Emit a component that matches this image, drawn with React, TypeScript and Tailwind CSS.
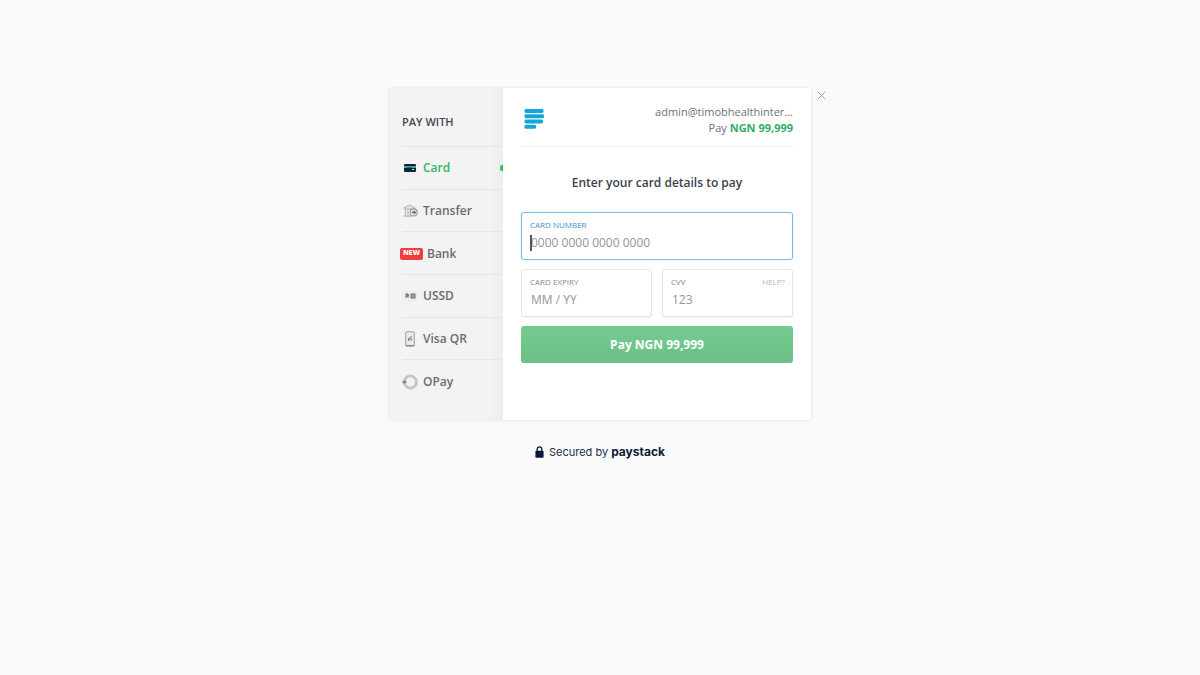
import type { ReactNode } from "react";

function CardIcon() {
  return (
    <svg width="12" height="8" viewBox="0 0 12 8" aria-hidden="true">
      <rect width="12" height="8" rx="1.2" fill="#0f2140" />
      <rect y="2" width="12" height="2" fill="#35b46c" />
      <rect x="3" y="3" width="5" height="1" fill="#2b6a78" />
      <rect x="8" y="5" width="2" height="1" fill="#e8eef2" />
    </svg>
  );
}

function TransferIcon() {
  return (
    <svg width="15" height="14" viewBox="0 0 15 14" fill="none" aria-hidden="true">
      <path d="M1 5V3.8L6.5 1 12 3.8V5z" fill="#dfe2e4" stroke="#b3b8bb" />
      <path d="M2.5 5v6.5M5 5v6.5M7.5 5v2M11 5v1" stroke="#b9bec1" strokeWidth="1.2" />
      <path d="M0.5 12h8" stroke="#b3b8bb" strokeWidth="1.4" />
      <circle cx="10.7" cy="8.4" r="3.5" fill="#f3f3f3" stroke="#9a9ea3" strokeWidth="1.2" />
      <path d="M8.6 8.4h3.6M10.7 6.6l1.8 1.8-1.8 1.8" stroke="#65696e" strokeWidth="1.2" />
    </svg>
  );
}

function UssdIcon() {
  return (
    <svg width="16" height="12" viewBox="0 0 16 12" fill="none" aria-hidden="true">
      <rect width="16" height="12" rx="2" fill="#efeff0" />
      <path d="M5 3v4.4M2.9 4.5l4.2 1M5 5.2L3.4 7.5M5 5.2l1.6 2.3M7.1 4.5L5 5.2" stroke="#7c7d83" strokeWidth="1.2" />
      <rect x="8.5" y="3.5" width="5" height="5" fill="#a6a7ac" />
      <path d="M9.8 3v6M12.2 3v6M8 4.8h6M8 7.2h6" stroke="#85868c" />
    </svg>
  );
}

function QrIcon() {
  return (
    <svg width="10" height="16" viewBox="0 0 10 16" fill="none" aria-hidden="true">
      <rect x="0.7" y="0.7" width="8.6" height="14.4" rx="1.3" fill="#e9eaeb" stroke="#a0a2a5" strokeWidth="1.1" />
      <path d="M1 14.6h8" stroke="#8d8f92" strokeWidth="1.3" />
      <path d="M3 10V7h1.5v3zM4.5 8V6h1v2zM5.5 6.2V5H7v1.2zM5.5 9.5V7.6H7v1.9z" fill="#898b8f" />
    </svg>
  );
}

function OPayIcon() {
  return (
    <svg width="16" height="16" viewBox="0 0 16 16" fill="none" aria-hidden="true">
      <circle cx="8.3" cy="8" r="6.1" stroke="#c3c6c8" strokeWidth="2.9" />
      <path d="M0.5 8h3.8" stroke="#7f8386" strokeWidth="2.4" />
    </svg>
  );
}

const methods: { name: string; icon?: ReactNode; fresh?: boolean; active?: boolean }[] = [
  { name: "Card", icon: <CardIcon />, active: true },
  { name: "Transfer", icon: <TransferIcon /> },
  { name: "Bank", fresh: true },
  { name: "USSD", icon: <UssdIcon /> },
  { name: "Visa QR", icon: <QrIcon /> },
  { name: "OPay", icon: <OPayIcon /> },
];

function Sidebar() {
  return (
    <nav
      aria-label="Payment methods"
      className="w-[114px] shrink-0 rounded-l bg-[linear-gradient(to_right,#f3f3f3_88%,#ededed)] pb-[18px] pl-[13px]"
    >
      <h2 className="flex h-[58px] items-center pt-[10px] text-[11px] font-semibold text-[#414951]">PAY WITH</h2>
      <ul className="grid h-64 grid-rows-6">
        {methods.map((m) => (
          <li key={m.name} className="flex border-t border-[#e5e5e5]">
            <button
              type="button"
              className={`relative flex w-full items-center pt-px text-left text-[12px] font-semibold ${
                m.active ? "text-[#35b46c]" : "text-[#6b6c6e]"
              }`}
            >
              {m.fresh ? (
                <span className="-ml-0.5 mr-1 flex h-3 w-[23px] items-center justify-center rounded-[2px] bg-[#f23d3d] text-[7px] font-extrabold text-white">
                  NEW
                </span>
              ) : (
                <span className="mr-[5px] flex w-4 justify-center">{m.icon}</span>
              )}
              {m.name}
              {m.active && (
                <span className="absolute right-0 h-1.5 w-[3px] rounded-l-[2px] bg-[#3bb75e] shadow-[0_0_8px_1px_#dfe8e3]" />
              )}
            </button>
          </li>
        ))}
      </ul>
    </nav>
  );
}

function Field({
  id,
  label,
  placeholder,
  focused,
  children,
}: {
  id: string;
  label: string;
  placeholder: string;
  focused?: boolean;
  children?: ReactNode;
}) {
  return (
    <div
      className={`relative h-12 min-w-0 flex-1 rounded-[3px] border bg-white px-2 pt-1.5 ${
        focused ? "border-[#7cbcec] shadow-[0_0_2px_#b5dcf5]" : "border-[#e4e5e6] shadow-[0_1px_1px_#f1f1f1]"
      }`}
    >
      <div className="flex h-3 items-center justify-between text-[8px] leading-3">
        <label htmlFor={id} className={focused ? "text-[#3f8fc8]" : "text-[#858a8d]"}>
          {label}
        </label>
        {children}
      </div>
      <div className="flex h-6 items-center">
        {focused && <span className="absolute h-4 w-0.5 bg-[#51545d]" />}
        <input
          id={id}
          inputMode="numeric"
          placeholder={placeholder}
          className="w-full pl-px text-[12px] text-[#414951] caret-transparent outline-none placeholder:text-[#939597]"
        />
      </div>
    </div>
  );
}

function Checkout() {
  return (
    <section className="min-w-0 flex-1 rounded-r bg-white px-[18px]">
      <header className="flex h-[59px] items-center justify-between border-b border-[#f1f1f1] pt-1.5">
        <svg width="20" height="20" viewBox="0 0 20 20" fill="#12a6d9" className="mb-0.5 ml-[3px]" role="img" aria-label="Merchant">
          <rect x="0.5" y="0" width="19" height="4" rx="1.4" />
          <rect x="0.5" y="5.3" width="19.5" height="4" rx="1.4" />
          <rect x="0.5" y="10.5" width="18.5" height="4" rx="1.4" />
          <rect x="0.5" y="15.8" width="11.5" height="4" rx="1.4" />
        </svg>
        <div className="text-right text-[11px] leading-4 text-[#6f7174]">
          <p>admin@timobhealthinter...</p>
          <p>
            Pay <strong className="font-bold text-[#2fae67]">NGN 99,999</strong>
          </p>
        </div>
      </header>
      <form onSubmit={(e) => e.preventDefault()} className="flex flex-col gap-[9px]">
        <h1 className="flex h-14 items-center justify-center pt-4 text-[12px] font-semibold text-[#3b424c]">
          Enter your card details to pay
        </h1>
        <div className="flex">
          <Field id="number" label="CARD NUMBER" placeholder="0000 0000 0000 0000" focused />
        </div>
        <div className="flex gap-[10px]">
          <Field id="expiry" label="CARD EXPIRY" placeholder="MM / YY" />
          <Field id="cvv" label="CVV" placeholder="123">
            <button type="button" className="-mr-px text-[#b5b9b7]">
              HELP?
            </button>
          </Field>
        </div>
        <button
          type="submit"
          className="h-[37px] rounded-[3px] bg-linear-to-b from-[#74cb90] to-[#6dc087] text-[12px] font-bold text-white"
        >
          Pay NGN 99,999
        </button>
      </form>
    </section>
  );
}

export default function App() {
  return (
    <main className="flex min-h-screen flex-col items-center bg-[#fafafa] px-6 pt-[88px] font-['Open_Sans','Noto_Sans',sans-serif]">
      <div className="relative flex w-full max-w-[422px] rounded shadow-[0_0_3px_rgba(0,0,0,0.14)]">
        <Sidebar />
        <Checkout />
        <button type="button" aria-label="Close" className="absolute top-[3px] -right-[15px] flex">
          <svg width="9" height="9" viewBox="0 0 9 9" fill="none" stroke="#a5a5a5" aria-hidden="true">
            <path d="M0.8 0.8l7.4 7.4M8.2 0.8L0.8 8.2" />
          </svg>
        </button>
      </div>
      <footer className="mt-[23px] flex items-center font-['Inter',sans-serif] text-[11px] leading-[18px] text-[#20304a]">
        <svg width="9" height="12" viewBox="0 0 9 12" fill="none" className="mr-[5px]" aria-hidden="true">
          <path d="M2.2 5.5V3.2a2.3 2.3 0 0 1 4.6 0v2.3" stroke="#0b1b35" strokeWidth="1.3" />
          <rect x="0.4" y="4.8" width="8.2" height="7" rx="1" fill="#0b1b35" />
        </svg>
        <span>Secured by</span>
        <strong className="ml-[3px] text-[12px] font-bold text-[#0b1b35]">paystack</strong>
      </footer>
    </main>
  );
}
